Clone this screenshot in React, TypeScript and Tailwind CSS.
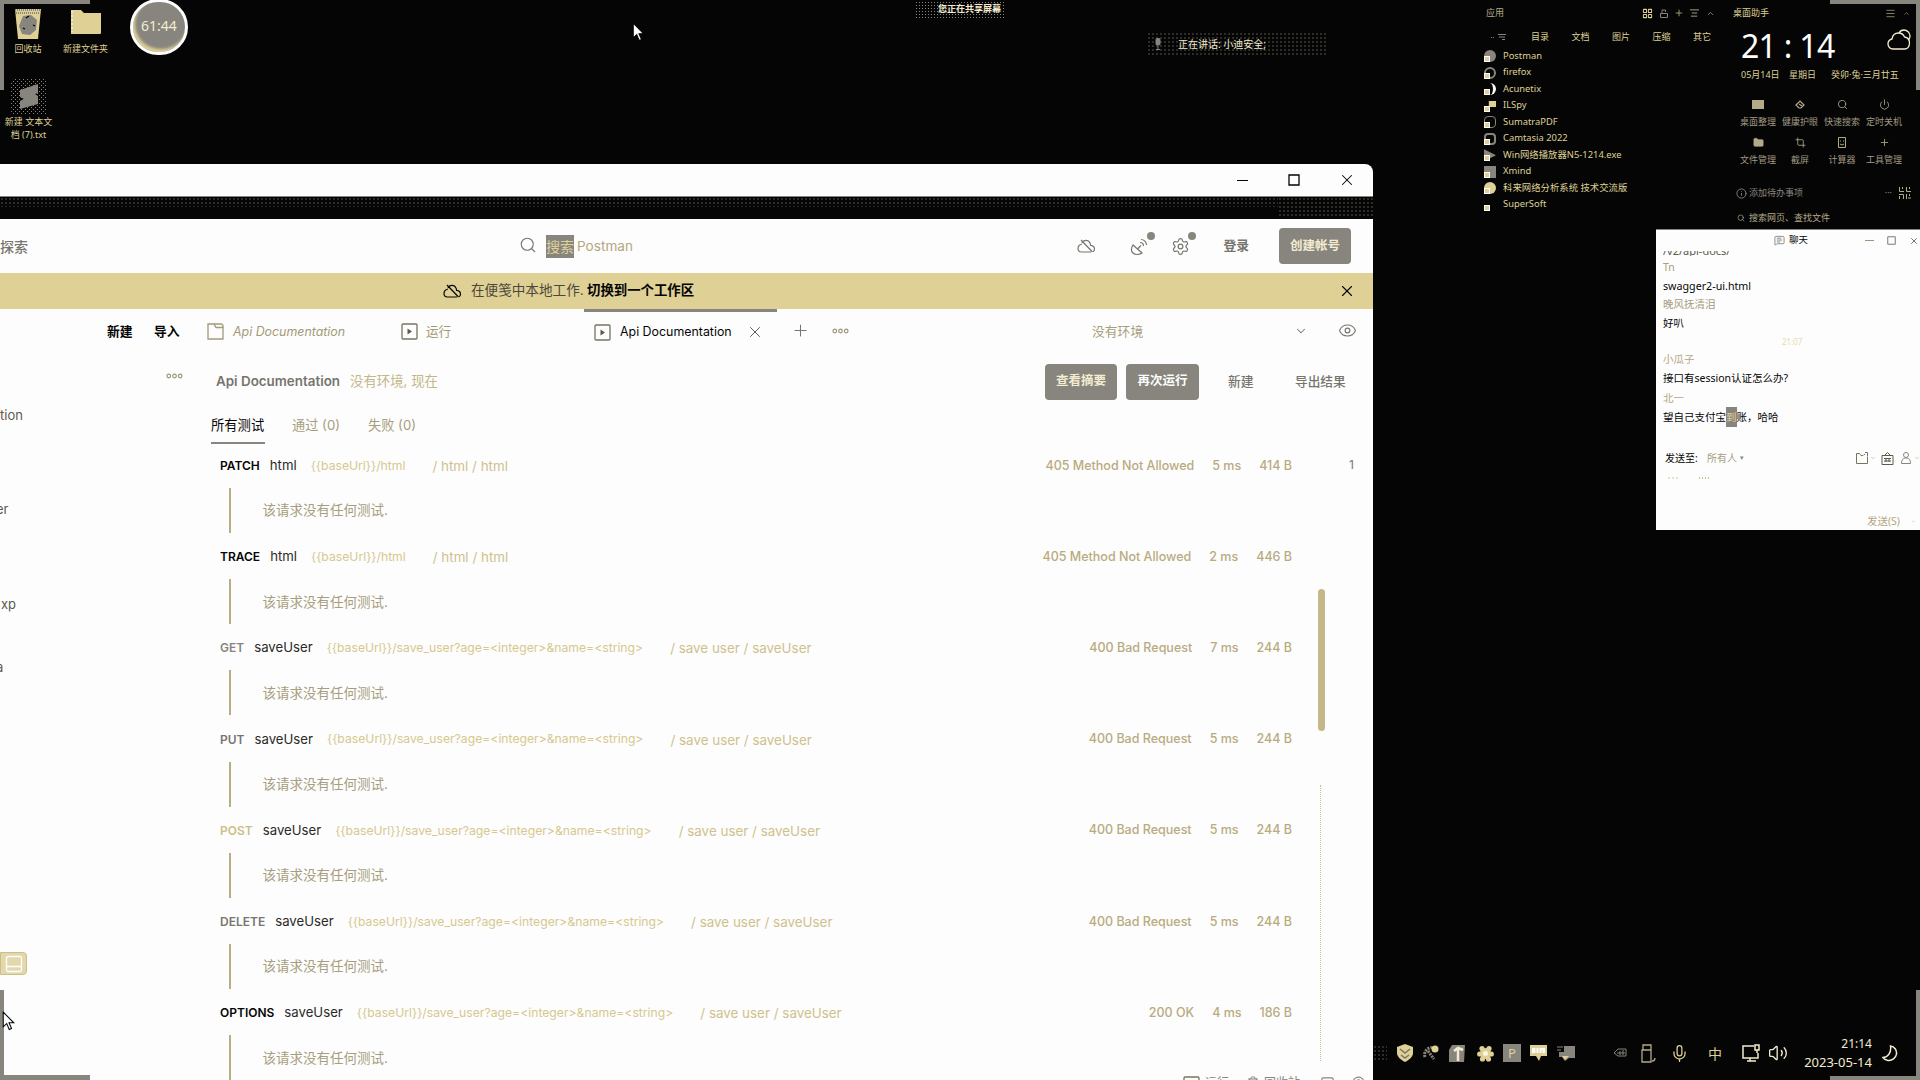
import React from "react";
import {
  Settings, Search, X, Plus, Eye, ChevronDown, ChevronUp, Folder,
  Power, Crop, Menu, LayoutGrid, Mic, Volume2,
  MessageSquareText, Trash2, PanelBottom, CircleHelp, Info,
} from "lucide-react";

type Result = {
  method: string;
  tone: string;
  name: string;
  url: string;
  path: string;
  status: string;
  time: string;
  size: string;
};

const USER_URL = "{{baseUrl}}/save_user?age=<integer>&name=<string>";
const USER_PATH = "/ save user / saveUser";

const results: Result[] = [
  { method: "PATCH", tone: "text-[#050505]", name: "html", url: "{{baseUrl}}/html", path: "/ html / html", status: "405 Method Not Allowed", time: "5 ms", size: "414 B" },
  { method: "TRACE", tone: "text-[#050505]", name: "html", url: "{{baseUrl}}/html", path: "/ html / html", status: "405 Method Not Allowed", time: "2 ms", size: "446 B" },
  { method: "GET", tone: "text-[#87857e]", name: "saveUser", url: USER_URL, path: USER_PATH, status: "400 Bad Request", time: "7 ms", size: "244 B" },
  { method: "PUT", tone: "text-[#77756e]", name: "saveUser", url: USER_URL, path: USER_PATH, status: "400 Bad Request", time: "5 ms", size: "244 B" },
  { method: "POST", tone: "text-[#cdbf88]", name: "saveUser", url: USER_URL, path: USER_PATH, status: "400 Bad Request", time: "5 ms", size: "244 B" },
  { method: "DELETE", tone: "text-[#77756e]", name: "saveUser", url: USER_URL, path: USER_PATH, status: "400 Bad Request", time: "5 ms", size: "244 B" },
  { method: "OPTIONS", tone: "text-[#050505]", name: "saveUser", url: USER_URL, path: USER_PATH, status: "200 OK", time: "4 ms", size: "186 B" },
];

const apps = [
  { name: "Postman", shape: "rounded-full bg-[#87857e]" },
  { name: "firefox", shape: "rounded-full border-2 border-[#87857e]" },
  { name: "Acunetix", shape: "rounded-full border-r-3 border-[#fdfdfd]" },
  { name: "ILSpy", shape: "bg-[#dfd096] [clip-path:polygon(40%_10%,100%_10%,100%_60%,40%_60%)]" },
  { name: "SumatraPDF", shape: "rounded-sm border border-[#87857e]" },
  { name: "Camtasia 2022", shape: "rounded-sm border-2 border-[#87857e]" },
  { name: "Win网络播放器N5-1214.exe", shape: "bg-[#87857e] [clip-path:polygon(0_0,100%_50%,0_100%)]" },
  { name: "Xmind", shape: "bg-[#87857e]" },
  { name: "科来网络分析系统 技术交流版", shape: "rounded-full bg-[#dfd096]" },
  { name: "SuperSoft", shape: "" },
];

const tools = [
  { label: "桌面整理", icon: <span className="h-[9px] w-3 bg-[#b3aa8a]" /> },
  {
    label: "健康护眼",
    icon: (
      <svg width="10" height="9" viewBox="0 0 10 9" fill="none" stroke="currentColor" strokeWidth="1.2">
        <path d="M1 5l4-4 4 4-3 3H4z" /><path d="M4 4l3 2" />
      </svg>
    ),
  },
  { label: "快速搜索", icon: <Search size={11} strokeWidth={1.8} /> },
  { label: "定时关机", icon: <Power size={11} strokeWidth={1.8} /> },
  { label: "文件管理", icon: <Folder size={11} fill="#b3aa8a" strokeWidth={1.6} /> },
  { label: "截屏", icon: <Crop size={11} strokeWidth={1.8} /> },
  {
    label: "计算器",
    icon: (
      <svg width="8" height="11" viewBox="0 0 8 11" fill="none" stroke="currentColor">
        <path d="M.5.5h7v10h-7zM2 4h1M5 4h1M2 7l2 1 2-1" />
      </svg>
    ),
  },
  { label: "工具管理", icon: <Plus size={11} strokeWidth={1.8} /> },
];

function Pointer({ className }: { className: string }) {
  return (
    <svg viewBox="0 0 12 19" className={className} fill="#fdfdfd" stroke="#050505" strokeWidth="1">
      <path d="M1 1v14l3.3-3 2.4 5.6 2.2-1-2.4-5.4H11z" />
    </svg>
  );
}

function Dots() {
  return (
    <svg width="17" height="6" viewBox="0 0 17 6" fill="none" stroke="#9c9679" strokeWidth="1.2">
      <circle cx="2.8" cy="3" r="1.8" />
      <circle cx="8.5" cy="3" r="1.8" />
      <circle cx="14.2" cy="3" r="1.8" />
    </svg>
  );
}

function OfflineCloud({ className }: { className?: string }) {
  return (
    <svg width="19" height="14" viewBox="0 0 19 14" className={className} fill="none" stroke="currentColor" strokeWidth="1.2">
      <path d="M5 5C3 5.500 1 7 1 9.500 1 11.500 2.500 13 4.500 13h9.500" />
      <path d="M5 4c1.500-3.500 6.500-3.500 8 0 .4.800.5 1.500.5 2.300 2.500.3 4 1.700 4 3.700 0 1.300-.5 2.300-1.500 2.800" />
      <path d="M4 1l11.500 12" />
    </svg>
  );
}

function Dish() {
  return (
    <svg width="20" height="20" viewBox="0 0 20 20" fill="none" stroke="currentColor" strokeWidth="1.2">
      <path d="M3 9c-2 3-2 6 0 8 2 2 6 2 9 0z" />
      <path d="M7.500 13l3.500-3.500" />
      <path d="M10 6.500c2 0 3.500 1.500 3.500 3.500M11 3.500c3 0 5.500 2.500 5.500 5.500" />
    </svg>
  );
}

function PlayBox() {
  return (
    <svg width="17" height="17" viewBox="0 0 17 17" className="shrink-0" fill="none" stroke="#77745f" strokeWidth="1.3">
      <rect x="1" y="1" width="15" height="15" rx="1" />
      <path d="M6.500 5.500v6l4.500-3z" fill="#5d5a4d" stroke="none" />
    </svg>
  );
}

function CollectionIcon() {
  return (
    <svg width="17" height="17" viewBox="0 0 17 17" className="shrink-0" fill="none" stroke="#a39a78" strokeWidth="1.3">
      <path d="M1 1h6l2 3.500h7V16H1z" />
      <path d="M7 1h7.500L16 2.500v2" />
    </svg>
  );
}

function SquareOutline({ size, stroke }: { size: number; stroke: string }) {
  return (
    <svg width={size} height={size} viewBox="0 0 12 12" fill="none" stroke={stroke} strokeWidth="1.3">
      <path d="M1 1h10v10H1z" />
    </svg>
  );
}

function ResultRow({ r }: { r: Result }) {
  return (
    <div className="h-[91.2px] shrink-0">
      <div className="flex h-5 items-center text-[13px]">
        <div className="flex items-center whitespace-pre">
          <span className={"text-[12px] font-semibold " + r.tone}>{r.method}</span>
          <span className="ml-[10px] text-[13.2px] text-[#2b2a27]">{r.name}</span>
          <span className="ml-[14px] text-[12.2px] text-[#d6c88e]">{r.url}</span>
          <span className="ml-[27px] text-[13.4px] text-[#cfc18c]">{r.path}</span>
        </div>
        <div className="mr-[81px] ml-auto flex gap-[18px] text-[12.5px] font-medium whitespace-pre text-[#b8ab80]">
          <span>{r.status}</span>
          <span>{r.time}</span>
          <span>{r.size}</span>
        </div>
      </div>
      <div className="mt-[12px] ml-[9px] flex h-[45px] items-center border-l-2 border-[#b8ad83] pl-[31.5px] text-[13.5px] text-[#a79e7e]">
        该请求没有任何测试.
      </div>
    </div>
  );
}

function PostmanWindow() {
  return (
    <div className="absolute top-[164px] left-0 flex h-[916px] w-[1373px] flex-col overflow-hidden rounded-tr-lg bg-[#fdfdfd] whitespace-nowrap text-[#050505]">
      <div className="flex h-8 shrink-0 items-center justify-end pr-[17px]">
        <span className="mr-[40px] h-px w-[11px] bg-[#050505]" />
        <SquareOutline size={12} stroke="#050505" />
        <X size={18} strokeWidth={1.4} className="ml-[38px]" />
      </div>
      <div className="flex h-[23px] shrink-0 justify-between border-t border-[#87857e] bg-[#050505]">
        <div className="h-[10px] grow bg-[radial-gradient(#87857e_0.5px,transparent_0.8px)] bg-[size:4px_4px]" />
        <div className="h-[21px] w-[95px] bg-[radial-gradient(#87857e_0.5px,transparent_0.8px)] bg-[size:4px_4px]" />
      </div>

      <div className="flex h-[54px] shrink-0 items-center text-[#77756e]">
        <span className="w-[519px] text-[14px] font-medium">探索</span>
        <Search size={18} strokeWidth={1.5} className="mr-[9px] -mt-[2px]" />
        <span className="mr-[3px] bg-[#87857e] text-[14px] leading-[23px] text-[#dfd096]">搜索</span>
        <span className="text-[13.6px] text-[#b3a77d]">Postman</span>
        <div className="ml-auto flex items-center pr-[22px]">
          <OfflineCloud className="mr-[34px]" />
          <span className="relative mr-[31px]">
            <Dish />
            <span className="absolute -top-[4px] -right-[5px] size-2 rounded-full bg-[#87857e]" />
          </span>
          <span className="relative mr-[33px] -ml-[10px]">
            <Settings size={19} strokeWidth={1.5} />
            <span className="absolute -top-[5px] -right-[6px] size-2 rounded-full bg-[#87857e]" />
          </span>
          <span className="mr-[30px] text-[12.8px] font-bold">登录</span>
          <span className="flex h-9 w-[72px] items-center justify-center rounded bg-[#87857e] text-[12.5px] font-bold text-[#f3ecd0]">创建帐号</span>
        </div>
      </div>

      <div className="flex h-[36px] shrink-0 items-center bg-[#dfd096] pb-px pl-[443px]">
        <OfflineCloud />
        <span className="ml-[9px] w-[116px] text-[13.6px] text-[#4b4839]">在便笺中本地工作.</span>
        <span className="text-[13.4px] font-bold">切换到一个工作区</span>
        <X size={18} strokeWidth={1.5} className="mr-[17px] ml-auto" />
      </div>

      <div className="flex h-[46px] shrink-0 items-center text-[12.6px]">
        <span className="ml-[107px] w-[47px] text-[12.8px] font-bold">新建</span>
        <span className="w-[53px] text-[12.8px] font-bold">导入</span>
        <span className="flex w-[194px] items-center gap-[9px] text-[#a39a78] italic">
          <CollectionIcon />
          <span className="text-[12.4px]">Api Documentation</span>
        </span>
        <span className="flex w-[183px] items-center gap-[8px] text-[#a39a78]">
          <PlayBox /> 运行
        </span>
        <span className="flex h-full w-[193px] items-center gap-[9px] border-t-3 border-[#87857e] pb-[3px] pl-[10px]">
          <PlayBox />
          <span className="text-[12.4px]">Api Documentation</span>
          <X size={18} strokeWidth={1.3} className="mr-[13px] ml-auto shrink-0 text-[#5d5a4d]" />
        </span>
        <Plus size={19} strokeWidth={1.3} className="-mt-[3px] ml-[14px] text-[#77756e]" />
        <span className="-mt-[3px] ml-[22px] w-[260px]"><Dots /></span>
        <span className="w-[202px] text-[12.8px] text-[#a79e7e]">没有环境</span>
        <ChevronDown size={14} strokeWidth={1.8} className="-mt-[3px] text-[#77756e]" />
        <Eye size={19} strokeWidth={1.4} className="-mt-[3px] ml-[30px] text-[#77756e]" />
      </div>

      <div className="flex h-[53px] shrink-0 items-center text-[13px]">
        <span className="mb-[11px] ml-[166px] w-[50px]"><Dots /></span>
        <span className="w-[134px] text-[13.4px] font-semibold text-[#77756e]">Api Documentation</span>
        <span className="text-[13.4px] text-[#c4b788]">没有环境, 现在</span>
        <span className="ml-auto flex h-9 w-[72px] items-center justify-center rounded bg-[#87857e] text-[12.5px] font-bold text-[#f3ecd0]">查看摘要</span>
        <span className="ml-[9px] flex h-9 w-[73px] items-center justify-center rounded bg-[#87857e] text-[12.5px] font-bold text-[#fdfdfd]">再次运行</span>
        <span className="ml-[29px] w-[67px] text-[12.8px] font-medium text-[#77756e]">新建</span>
        <span className="w-[78px] text-[12.7px] font-medium text-[#77756e]">导出结果</span>
      </div>

      <div className="flex min-h-0 grow">
        <div className="flex w-[211px] shrink-0 flex-col text-[13px] text-[#5d5a4d]">
          <span className="-mt-[2px] h-[94px] shrink-0">tion</span>
          <span className="-ml-[4px] h-[95px] shrink-0">er</span>
          <span className="h-[63px] shrink-0 pl-px">xp</span>
          <span className="-ml-[4px] h-[294px] shrink-0">a</span>
          <span className="flex h-[23px] w-[27px] shrink-0 items-center justify-center rounded-r border border-[#cdbf88] bg-[#e3d8ab] text-[#fdfdfd]">
            <PanelBottom size={20} strokeWidth={1.6} />
          </span>
        </div>
        <div className="flex min-w-0 grow flex-col">
          <div className="flex h-[36px] shrink-0 pt-1 text-[13px] text-[#a79e7e]">
            <span className="h-8 w-[54px] border-b-2 border-[#87857e] pt-1 text-[13.3px] text-[#050505]">所有测试</span>
            <span className="ml-[27px] w-[76px] pt-1 text-[13.2px]">通过 (0)</span>
            <span className="pt-1 text-[13.2px]">失败 (0)</span>
          </div>
          <div className="relative mt-[12px] ml-[9px] flex min-h-0 grow flex-col overflow-hidden">
            {results.map((r, i) => (
              <ResultRow key={i} r={r} />
            ))}
            <span className="absolute top-0 right-[19px] text-[12px] text-[#77756e]">1</span>
            <span className="absolute top-[133px] right-[48px] h-[142px] w-[7px] rounded-full bg-[#c4b788]" />
            <span className="absolute top-[329px] right-[52px] h-[276px] border-l border-dotted border-[#cdbf88]" />
            <div className="absolute right-2 bottom-0 flex h-1 items-start overflow-hidden text-[12px] leading-[14px] text-[#87857e]">
              <span className="mr-[5px]"><PlayBox /></span>
              <span className="mr-[18px]">运行</span>
              <Trash2 size={12} className="mr-[5px] shrink-0" />
              <span className="mr-[20px]">回收站</span>
              <PanelBottom size={15} className="mr-[17px] shrink-0" />
              <CircleHelp size={13} className="shrink-0" />
            </div>
          </div>
        </div>
      </div>
    </div>
  );
}

function DesktopIcons() {
  return (
    <>
      <div className="absolute top-2 left-[3px] flex w-[50px] flex-col items-center">
        <svg width="28" height="32" viewBox="0 0 28 32">
          <path d="M1 1h26l-3 30H4z" fill="#dfd096" />
          <path d="M1 2h26M2 5h24" stroke="#87857e" strokeWidth="2" strokeDasharray="1 1" />
          <path d="M9 8l8-1 6 5-1 10-6 5-8-1-3-8z" fill="#87857e" />
          <path d="M12 10l3-2M19 17l2 1M9 20l2 1" stroke="#050505" strokeWidth="1.3" />
        </svg>
        <span className="mt-[2px]">回收站</span>
      </div>
      <div className="absolute top-[9px] left-[55px] flex w-[61px] flex-col items-center">
        <svg width="32" height="26" viewBox="0 0 32 26">
          <path d="M1 1h10l3 3h17v20a1 1 0 0 1-1 1H1z" fill="#dfd096" />
          <path d="M2 2v21" stroke="#fdfdfd" strokeDasharray="2 2" />
        </svg>
        <span className="mt-[7px]">新建文件夹</span>
      </div>
      <div className="absolute -top-px left-[130px] flex h-[56px] w-[58px] items-center justify-center rounded-full border-3 border-[#fdfdfd] bg-[#87857e] pb-[3px] text-[14px] text-[#f3ecd0] shadow-[inset_2px_-3px_3px_#dfd096]">
        61:44
      </div>
      <div className="absolute top-[79px] left-0 flex w-[57px] flex-col items-center text-center">
        <svg width="36" height="36" viewBox="0 0 36 36">
          <defs>
            <pattern id="dust" width="4" height="4" patternUnits="userSpaceOnUse">
              <path d="M0 0h1v1H0zM2 2h1v1H2z" fill="#87857e" />
            </pattern>
          </defs>
          <rect width="36" height="36" rx="4" fill="url(#dust)" />
          <path d="M9 11l18-6v9l-3 1 3 2v8L9 30v-8l4-2-4-2z" fill="#87857e" />
        </svg>
        <span className="leading-[13px]">新建 文本文<br />档 (7).txt</span>
      </div>
      <Pointer className="absolute top-[22px] left-[632px] h-5 w-[13px]" />
      <div className="absolute top-px left-[915px] flex h-[17px] w-[90px] items-center justify-end bg-[radial-gradient(#87857e_0.6px,transparent_0.9px)] bg-[size:3px_3px] pr-1 text-[#f3ecd0]">
        <span className="-mt-[2px] bg-[#050505]/60 leading-[11px] font-bold">您正在共享屏幕</span>
      </div>
      <div className="absolute top-8 left-[1147px] flex h-6 w-[180px] items-center bg-[radial-gradient(#87857e_0.5px,transparent_0.8px)] bg-[size:4px_4px] pl-[7px] text-[10px] text-[#f3ecd0]">
        <svg width="8" height="12" viewBox="0 0 8 12" className="mr-[16px]" stroke="#87857e">
          <rect x="2" y=".5" width="4" height="6.500" rx="1" fill="#87857e" />
          <path d="M4 8v3M2 11.500h4" />
        </svg>
        正在讲话: 小迪安全;
      </div>
    </>
  );
}

function AppPanel() {
  return (
    <div className="absolute top-0 left-[1484px] flex w-[240px] flex-col text-[#dfd096]">
      <div className="flex h-[26px] items-center pl-[2px] text-[9px] text-[#b3aa8a]">
        <span className="w-[156px]">应用</span>
        <LayoutGrid size={11} strokeWidth={2.2} className="mr-[7px] text-[#dfd096]" />
        <svg width="8" height="9" viewBox="0 0 8 9" className="mr-[6px]" fill="none" stroke="#87857e">
          <path d="M.5 4.500h7v4h-7zM2 4V1h3.500v2" />
        </svg>
        <Plus size={10} className="mr-[6px]" />
        <svg width="9" height="8" viewBox="0 0 10 8" className="mr-[7px]" stroke="currentColor">
          <path d="M0 .5h10M2 4h6M1 7.500h7" />
        </svg>
        <ChevronUp size={9} />
      </div>
      <div className="flex h-[22px] items-center text-[9px]">
        <span className="flex w-[47px] items-center gap-[4px] pl-[7px] text-[#87857e]">
          <span className="h-[2px] w-[3px] border-b border-dotted border-[#87857e]" />
          <svg width="8" height="6" viewBox="0 0 8 6" stroke="currentColor">
            <path d="M0 .5h8M1 3h6M4 5.500h3" />
          </svg>
        </span>
        <span className="w-[40.5px]">目录</span>
        <span className="w-[40.5px]">文档</span>
        <span className="w-[40.5px]">图片</span>
        <span className="w-[40.5px]">压缩</span>
        <span>其它</span>
      </div>
      <div className="flex flex-col">
        {apps.map((a) => (
          <div key={a.name} className="flex h-[16.5px] items-center whitespace-nowrap">
            <span className="relative mr-[7px] size-3">
              <span className={"block size-3 " + a.shape} />
              <span className="absolute bottom-0 left-0 size-[6px] border border-[#fdfdfd] bg-[#dfd096]" />
            </span>
            <span className="-mt-px text-[9.4px] leading-[14px]">{a.name}</span>
          </div>
        ))}
      </div>
    </div>
  );
}

function AssistantPanel() {
  return (
    <div className="absolute top-0 left-[1733px] flex w-[183px] flex-col text-[9px] whitespace-nowrap text-[#b3aa8a]">
      <div className="flex h-[26px] items-center">
        <span className="text-[#dfd096]">桌面助手</span>
        <Menu size={11} strokeWidth={1.6} className="mr-[7px] ml-auto" />
        <ChevronUp size={7} className="mr-[6px]" />
      </div>
      <div className="flex h-[39px] items-center pl-[8px]">
        <span className="text-[32px] leading-none tracking-[-0.7px] text-[#fdfdfd]">21 : 14</span>
        <svg width="24" height="21" viewBox="0 0 24 21" className="mr-[5px] mb-[13px] ml-auto" fill="none" stroke="#f3ecd0" strokeWidth="1.3">
          <path d="M6 20c-3 0-5-2.500-5-5 0-2.800 2-4.500 4-5 .5-3.500 3-6 6.500-6 3 0 5 1.500 6 4 3 .5 5 3 5 6 0 3.500-2 6-5 6z" />
          <path d="M12 4c1-2 3-3 5-3 3 0 6 2.500 6 6 0 2-.5 3-1.500 4" />
        </svg>
      </div>
      <div className="flex h-5 items-center pl-2 text-[#dfd096]">
        <span className="w-12">05月14日</span>
        <span className="w-[42px]">星期日</span>
        <span>癸卯·兔·三月廿五</span>
      </div>
      <div className="mt-[12px] grid grid-cols-4 pr-[11px] pl-1">
        {tools.map((t) => (
          <div key={t.label} className="flex h-[38px] flex-col items-center">
            <span className="flex h-[15px] items-center text-[#b3aa8a]">{t.icon}</span>
            <span className="mt-[3px] leading-[14px] text-[#a09a83]">{t.label}</span>
          </div>
        ))}
      </div>
      <div className="mt-[10px] flex h-5 items-center pl-[3px] text-[#87857e]">
        <Info size={11} className="mr-[2px]" />
        添加待办事项
        <span className="mr-[7px] ml-auto">···</span>
        <svg width="12" height="12" viewBox="0 0 12 12" className="mr-[5px]" fill="none" stroke="#b3aa8a">
          <path d="M.5 0v4.500H5M3.500 0v2M7.500 0v4.500H12M10.500 0v2M0 7.500h4.500V12M.5 9v3M7.500 7v5M10.500 7v2M9 11h3" />
        </svg>
      </div>
      <div className="mt-[5px] flex h-5 items-center pl-1">
        <Search size={8} className="mr-[4px]" />
        搜索网页、查找文件
      </div>
    </div>
  );
}

function ChatWindow() {
  return (
    <div className="absolute top-[229px] left-[1656px] flex h-[301px] w-[264px] flex-col overflow-hidden border-t border-[#87857e] bg-[#fdfdfd] pl-[7px] text-[10.5px] whitespace-nowrap text-[#050505]">
      <div className="flex h-[21px] shrink-0 items-center text-[9.5px]">
        <MessageSquareText size={11} className="mr-[4px] ml-[111px] text-[#87857e]" />
        聊天
        <span className="mr-[13px] ml-auto h-px w-[9px] bg-[#9c9679]" />
        <SquareOutline size={9} stroke="#77756e" />
        <X size={10} className="mr-px ml-[13px] text-[#5d5a4d]" />
      </div>
      <div className="flex h-[5px] shrink-0 items-end overflow-hidden text-[11px] leading-[10px] text-[#5d5a4d]">/v2/api-docs/</div>
      <span className="mt-[4px] h-[15px] leading-[15px] text-[#a79e7e]">Tn</span>
      <span className="mt-[1px] h-[20px] text-[10.7px] leading-[20px]">swagger2-ui.html</span>
      <span className="h-[17px] leading-[17px] text-[#a79e7e]">晚风抚清泪</span>
      <span className="h-[20px] leading-[20px]">好叭</span>
      <span className="h-[17px] pl-[119px] text-[8px] leading-[17px] text-[#e6dab0]">21:07</span>
      <span className="h-[18px] leading-[18px] text-[#b3a77d]">小瓜子</span>
      <span className="h-[21px] leading-[21px]">接口有session认证怎么办?</span>
      <span className="h-[18px] leading-[18px] text-[#b3a77d]">北一</span>
      <span className="h-[20px] leading-[20px]">
        望自己支付宝<span className="inline-block bg-[#87857e] text-[#dfd096]">到</span>账，哈哈
      </span>
      <div className="mt-[19px] flex h-[24px] shrink-0 items-center text-[10px]">
        <span className="w-[44px] pl-[2px]">发送至:</span>
        <span className="text-[#a79e7e]">所有人</span>
        <span className="ml-[3px] text-[7px] text-[#87857e]">▾</span>
        <svg width="12" height="12" viewBox="0 0 12 12" className="ml-auto" fill="none" stroke="#77745f">
          <path d="M.5 1.500h3l1.500 2h2l1-1h1M.5 1.500v10h11v-7M9 .5h2.500V4" />
        </svg>
        <ChevronDown size={6} className="mr-[5px] ml-[2px] text-[#a79e7e]" />
        <svg width="13" height="13" viewBox="0 0 13 13" fill="none" stroke="#5d5a4d">
          <path d="M1 3.500h11v9H1zM3.500 3.500l3-3 3 3M3 6.500h7M3 9h7M5 6v4M8 6v4" />
        </svg>
        <svg width="10" height="12" viewBox="0 0 10 12" className="ml-[7px]" fill="none" stroke="#87857e">
          <circle cx="5" cy="3" r="2.500" />
          <path d="M.5 11.500c0-4 2-5.500 4.500-5.500s4.500 1.500 4.500 5.500z" />
        </svg>
        <ChevronDown size={6} className="ml-[3px] text-[#a79e7e]" />
      </div>
      <div className="mt-[3px] flex h-[10px] shrink-0 items-center gap-[20px] pl-[4px]">
        <span className="h-[4px] w-[11px] bg-[radial-gradient(#cdbf88_0.6px,transparent_0.8px)] bg-[size:4px_4px]" />
        <span className="h-[4px] w-[11px] bg-[radial-gradient(#cdbf88_0.6px,transparent_0.8px)] bg-[size:3px_4px]" />
      </div>
      <div className="mt-auto flex h-[17px] shrink-0 items-center justify-end text-[10.5px] text-[#b3a77d]">
        发送(S)
        <ChevronDown size={5} className="mr-[4px] ml-[11px]" />
      </div>
    </div>
  );
}

function Tray() {
  return (
    <div className="absolute right-0 bottom-0 flex h-[54px] w-[547px] items-center pr-[22px] text-[#dfd096]">
      <span className="mr-[10px] h-[16px] w-[14px] bg-[radial-gradient(#87857e_0.5px,transparent_0.8px)] bg-[size:4px_4px]" />
      <svg width="16" height="18" viewBox="0 0 16 18" className="mr-[10px]">
        <path d="M8 0l8 3v6c0 4-4 7-8 9-4-2-8-5-8-9V3z" fill="#dfd096" />
        <path d="M3 5l5 4 5-4M4 11l4 3 4-3" stroke="#77756e" strokeWidth="1.500" fill="none" />
      </svg>
      <svg width="17" height="16" viewBox="0 0 17 16" className="mr-[9px]">
        <path d="M2 12C0 5 7 1 12 3M5 6l6 8" stroke="#87857e" strokeWidth="3" strokeDasharray="2 1" fill="none" />
        <circle cx="12" cy="4" r="3.500" fill="#dfd096" />
      </svg>
      <svg width="18" height="17" viewBox="0 0 18 17" className="mr-[10px]">
        <path d="M3 0h13l-1 17H0V5z" fill="#87857e" />
        <path d="M9 3v13M5 6l4-3 5 2" stroke="#f3ecd0" strokeWidth="2.500" fill="none" />
      </svg>
      <svg width="17" height="17" viewBox="0 0 17 17" className="mr-[9px]" fill="#dfd096">
        <circle cx="8.500" cy="8.500" r="5.500" />
        <circle cx="5" cy="3.500" r="2.600" /><circle cx="12" cy="3.500" r="2.600" /><circle cx="2.700" cy="9" r="2.600" />
        <circle cx="14.300" cy="9" r="2.600" /><circle cx="5.500" cy="14" r="2.600" /><circle cx="11.500" cy="14" r="2.600" />
        <circle cx="8.500" cy="8.500" r="2.500" fill="#f9f5e4" />
      </svg>
      <span className="mr-[9px] flex h-[18px] w-[18px] items-center justify-center bg-[#87857e] text-[13px] leading-none">P</span>
      <svg width="17" height="18" viewBox="0 0 17 18" className="mr-[10px]">
        <path d="M0 1h17v11h-6l-2 5-3-5H0z" fill="#dfd096" />
        <path d="M2 4h13v5H2z" fill="#fdfdfd" />
        <path d="M6 4v5M9 4v5M12 6v3" stroke="#dfd096" />
      </svg>
      <svg width="18" height="16" viewBox="0 0 18 16" className="mr-[38px]">
        <path d="M7 1h11v12h-6l-4 3-3-4H2V7h5z" fill="#87857e" />
        <path d="M0 2h6M0 5h4" stroke="#87857e" />
        <path d="M5 11h7l-4 4z" fill="#dfd096" />
      </svg>
      <svg width="14" height="10" viewBox="0 0 14 10" className="mr-[14px]" fill="none" stroke="#87857e">
        <path d="M5 1h8v7H5L1 5zM4 5h8M7 3v4M10 2v5" />
      </svg>
      <svg width="15" height="19" viewBox="0 0 15 19" className="mr-[16px]" fill="none" stroke="#b3aa8a" strokeWidth="1.300">
        <path d="M2 1h8v5H2zM1 6h9v12H1zM11 17c2 0 3-1 3-3" />
      </svg>
      <Mic size={19} strokeWidth={1.6} className="mr-[19px] -ml-[2px]" />
      <span className="mr-[19px] w-[15px] text-[14px]">中</span>
      <svg width="19" height="19" viewBox="0 0 19 19" className="mr-[8px]" fill="none" stroke="#f3ecd0" strokeWidth="1.500">
        <path d="M12 2H1v12h15V9M5 17h9M8 14v3" />
        <path d="M13 1h4v5h-4zM15 6v3" />
      </svg>
      <Volume2 size={20} strokeWidth={1.6} className="-ml-px text-[#f3ecd0]" />
      <div className="mr-[10px] ml-auto flex flex-col items-end text-[13px] leading-[18px] text-[#f3ecd0]">
        <span className="text-[12px]">21:14</span>
        <span>2023-05-14</span>
      </div>
      <svg width="16" height="17" viewBox="0 0 16 17" fill="none" stroke="#f3ecd0" strokeWidth="1.500">
        <path d="M8.500 1c4 .5 6.500 4 6 8-.6 4-4.500 7-8.500 6.500-2.300-.3-4-1.400-5-3 5 0 8.500-5 7.500-11.500z" />
      </svg>
    </div>
  );
}

export default function App() {
  return (
    <div className="relative h-[1080px] w-[1920px] overflow-hidden bg-[#050505] font-['Noto_Sans','Noto_Sans_CJK_SC',sans-serif] text-[9px] text-[#dfd096]">
      <div className="absolute top-0 left-0 h-[90px] w-[90px] border-t-4 border-l-4 border-[#87857e]" />
      <div className="absolute top-0 right-0 h-[90px] w-[90px] border-t-4 border-r-4 border-[#87857e]" />
      <div className="absolute right-0 bottom-0 h-[90px] w-[90px] border-r-4 border-b-4 border-[#87857e]" />
      <DesktopIcons />
      <AppPanel />
      <AssistantPanel />
      <ChatWindow />
      <Tray />
      <div className="font-['Inter','Noto_Sans_CJK_SC',sans-serif]">
        <PostmanWindow />
      </div>
      <div className="absolute bottom-0 left-0 h-[90px] w-[90px] border-b-5 border-l-4 border-[#87857e]" />
      <Pointer className="absolute top-[1011px] left-[2px] h-5 w-[13px]" />
    </div>
  );
}
